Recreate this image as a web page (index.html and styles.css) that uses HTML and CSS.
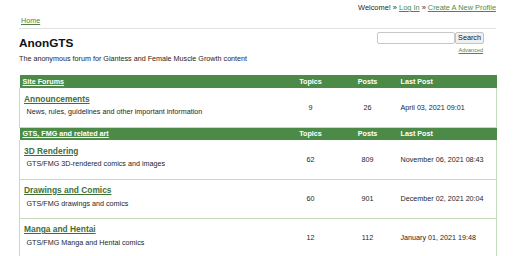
FILE: index.html
```html
<!DOCTYPE html>
<html>
<head>
<meta charset="utf-8">
<link rel="stylesheet" href="styles.css">
</head>
<body>
<div class="page">
  <div class="topbar">Welcome! &raquo; <a href="#">Log In</a> &raquo; <a href="#">Create A New Profile</a></div>
  <div class="crumbs"><a href="#">Home</a></div>
  <div class="masthead">
    <div class="brand">
      <h1 class="title">AnonGTS</h1>
      <p class="tagline">The anonymous forum for Giantess and Female Muscle Growth content</p>
    </div>
    <div class="search">
      <div class="search-row"><input class="search-input" type="text"><button class="search-btn">Search</button></div>
      <a class="advanced" href="#">Advanced</a>
    </div>
  </div>
  <table class="forums">
    <colgroup><col class="c-name"><col class="c-topics"><col class="c-posts"><col class="c-last"></colgroup>
    <tr class="cat">
      <th class="cat-name"><a href="#">Site Forums</a></th><th class="num">Topics</th><th class="num">Posts</th><th class="last">Last Post</th>
    </tr>
    <tr class="forum">
      <td class="fname"><a class="flink" href="#">Announcements</a><div class="fdesc">News, rules, guidelines and other important information</div></td>
      <td class="num">9</td><td class="num">26</td><td class="last">April 03, 2021 09:01</td>
    </tr>
    <tr class="cat">
      <th class="cat-name"><a href="#">GTS, FMG and related art</a></th><th class="num">Topics</th><th class="num">Posts</th><th class="last">Last Post</th>
    </tr>
    <tr class="forum">
      <td class="fname"><a class="flink" href="#">3D Rendering</a><div class="fdesc">GTS/FMG 3D-rendered comics and images</div></td>
      <td class="num">62</td><td class="num">809</td><td class="last">November 06, 2021 08:43</td>
    </tr>
    <tr class="forum">
      <td class="fname"><a class="flink" href="#">Drawings and Comics</a><div class="fdesc">GTS/FMG drawings and comics</div></td>
      <td class="num">60</td><td class="num">901</td><td class="last">December 02, 2021 20:04</td>
    </tr>
    <tr class="forum">
      <td class="fname"><a class="flink" href="#">Manga and Hentai</a><div class="fdesc">GTS/FMG Manga and Hentai comics</div></td>
      <td class="num">12</td><td class="num">112</td><td class="last">January 01, 2021 19:48</td>
    </tr>
  </table>
</div>
</body>
</html>
```
FILE: styles.css
```css
* { box-sizing: border-box; }
html, body { margin: 0; padding: 0; background: #fff; }
body {
  font-family: "Liberation Sans", Arial, sans-serif;
  font-size: 7.2px;
  color: #1e1e1e;
}
a { color: #4c8a48; }
.page { padding: 0 30px 0 19px; }
.topbar {
  height: 14px;
  padding-top: 3px;
  line-height: 9px;
  text-align: right;
  font-size: 7.4px;
}
.crumbs {
  padding: 2px 0 3px 2px;
  line-height: 9px;
  border-bottom: 1px solid #e2e2e2;
}
.crumbs a { color: #4f7f4b; }
.masthead {
  display: flex;
  justify-content: space-between;
  height: 46px;
}
.brand { padding-top: 7px; }
.title {
  margin: 0;
  font-size: 11.8px;
  line-height: 14px;
  font-weight: bold;
  color: #111;
}
.tagline {
  margin: 4px 0 0;
  line-height: 9px;
}
.search {
  padding-top: 3px;
  margin-right: 12px;
  display: flex;
  flex-direction: column;
  align-items: flex-end;
}
.search-row { display: flex; }
.search-input {
  width: 78px;
  height: 12px;
  margin: 0;
  padding: 0;
  border: 1px solid #c8c8c8;
  border-radius: 2px;
  background: #fff;
}
.search-btn {
  width: 29px;
  height: 12px;
  margin: 0;
  padding: 0;
  font-family: "Liberation Sans", Arial, sans-serif;
  font-size: 7.2px;
  line-height: 10px;
  color: #111;
  background: #efefef;
  border: 1px solid #c4c4c4;
  border-radius: 2px;
}
.advanced {
  margin-top: 2px;
  margin-right: 1px;
  font-size: 5.5px;
  line-height: 8px;
}
.forums {
  width: 477px;
  border-collapse: collapse;
  table-layout: fixed;
}
.c-name { width: 264px; }
.c-topics { width: 54px; }
.c-posts { width: 60px; }
.c-last { width: 99px; }
.cat th {
  height: 13px;
  padding: 0;
  background: #4c8a48;
  color: #fff;
  font-weight: bold;
  line-height: 9px;
}
.cat a { color: #fff; }
.cat .cat-name { text-align: left; padding-left: 3px; }
.num { text-align: center; }
.cat .last, .forum .last { text-align: left; padding-left: 3px; }
.forum td {
  border-left: 1px solid #c3dcbb;
  border-right: 1px solid #c3dcbb;
  border-bottom: 1px solid #c3dcbb;
  vertical-align: middle;
  padding: 0;
  height: 39px;
}
.forum td.num, .forum td.last { border-left: none; border-right: none; }
.forum td.last { border-right: 1px solid #c3dcbb; }
.forum td.fname {
  vertical-align: top;
  padding: 5.5px 0 0 4px;
  border-right: none;
}
.flink {
  display: block;
  font-size: 8.4px;
  line-height: 11px;
  font-weight: bold;
  color: #3f7038;
}
.fdesc {
  margin-top: 2.5px;
  padding-left: 2.5px;
  line-height: 9px;
}
```
